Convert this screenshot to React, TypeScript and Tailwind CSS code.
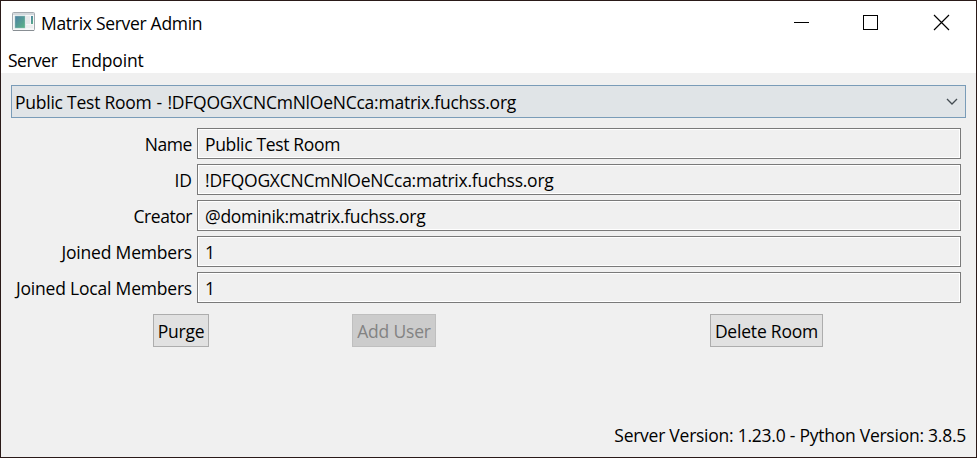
import type { ReactNode } from "react";

const fields = [
  { label: "Name", value: "Public Test Room", spacing: "tracking-[-0.33px]", labelSpacing: "tracking-[-0.45px]" },
  { label: "ID", value: "!DFQOGXCNCmNlOeNCca:matrix.fuchss.org", spacing: "tracking-[-0.24px]", labelSpacing: "" },
  { label: "Creator", value: "@dominik:matrix.fuchss.org", spacing: "tracking-[-0.3px]", labelSpacing: "tracking-[-0.45px]" },
  { label: "Joined Members", value: "1", spacing: "", labelSpacing: "tracking-[-0.2px]" },
  { label: "Joined Local Members", value: "1", spacing: "", labelSpacing: "tracking-[-0.2px]" },
];

function AppIcon() {
  return (
    <svg className="ml-[11px] mt-[11px] shrink-0" width="23" height="20" viewBox="0 0 23 20">
      <defs>
        <linearGradient id="pane" x1="0" y1="0" x2="1" y2="1">
          <stop offset="0" stopColor="#4d7fa6" />
          <stop offset="1" stopColor="#5cb585" />
        </linearGradient>
      </defs>
      <rect x="0.5" y="0.5" width="22" height="18" rx="1" fill="#f6f7f8" stroke="#a3a9ae" />
      <rect x="1" y="1" width="21" height="2" fill="#d3d8dc" />
      <rect x="3" y="4" width="10" height="12" fill="url(#pane)" stroke="#9ec3c0" strokeWidth="0.5" />
      <rect x="14" y="4" width="4" height="8" fill="#e6e8ea" />
      <rect x="19" y="4" width="2" height="8" fill="url(#pane)" />
      <rect x="14" y="13" width="7" height="3" fill="#eceeef" />
      <path d="M1 18.5h21" stroke="#888e93" />
    </svg>
  );
}

function PushButton({ className, children, disabled }: { className: string; children: ReactNode; disabled?: boolean }) {
  return (
    <button
      disabled={disabled}
      className={`flex h-[33px] items-center justify-center whitespace-nowrap border ${className} ${
        disabled ? "border-[#bfbfbf] bg-[#cccccc] text-[#838383]" : "border-[#adadad] bg-[#e1e1e1] text-black"
      }`}
    >
      {children}
    </button>
  );
}

export default function App() {
  return (
    <div className="flex h-[458px] w-[977px] flex-col overflow-hidden border border-[#2a1a18] bg-[#f0f0f0] font-['Open_Sans',sans-serif] text-[17.5px] leading-6 text-black">
      <header className="flex h-[46px] shrink-0 bg-white">
        <AppIcon />
        <h1 className="ml-1.5 mt-[10px] tracking-[-0.3px]">Matrix Server Admin</h1>
        <svg className="ml-auto mr-[26px] mt-[13px]" width="157" height="17" viewBox="0 0 157 17" fill="none" stroke="black">
          <path d="M1 8.5h15" />
          <rect x="70.5" y="1.5" width="14" height="14" />
          <path d="M141 1l15 15M156 1l-15 15" strokeWidth="1.2" />
        </svg>
      </header>
      <nav className="flex h-[26px] shrink-0 gap-[14px] bg-white pl-[7px] pt-[1px]">
        <span className="tracking-[-0.5px]">Server</span>
        <span className="tracking-[-0.2px]">Endpoint</span>
      </nav>
      <main className="flex grow flex-col pl-[10px] pr-[10px] pt-[12px]">
        <div className="flex h-[33px] items-center justify-between border border-[#7a9cb8] bg-[#e0e4e7] pl-[3px] pr-[7px]">
          <span className="tracking-[-0.24px]">
            Public Test Room<span className="tracking-[0.4px]"> - </span>!DFQOGXCNCmNlOeNCca:matrix.fuchss.org
          </span>
          <svg width="12" height="8" viewBox="0 0 12 8" fill="none" stroke="#444c52" strokeWidth="1.3">
            <path d="M1 1l5 5 5-5" />
          </svg>
        </div>
        <div className="mt-[10px] flex flex-col gap-[5px] pr-[5px]">
          {fields.map((f) => (
            <label key={f.label} className="flex h-[31px]">
              <span className={`mr-[5px] w-[181px] shrink-0 whitespace-nowrap pt-[4px] text-right ${f.labelSpacing}`}>{f.label}</span>
              <span className={`grow border border-[#7a7a7a] pl-[7px] pt-[3px] shadow-[inset_0_0_0_1px_white] ${f.spacing}`}>{f.value}</span>
            </label>
          ))}
        </div>
        <div className="mt-[11px] flex pl-[142px]">
          <PushButton className="w-[56px] tracking-[-0.2px]">Purge</PushButton>
          <PushButton className="ml-[143px] w-[84px] tracking-[-0.2px]" disabled>Add User</PushButton>
          <PushButton className="ml-[274px] w-[113px] tracking-[-0.2px]">Delete Room</PushButton>
        </div>
        <footer className="mb-[10px] mt-auto text-right tracking-[-0.25px]">Server Version: 1.23.0 - Python Version: 3.8.5</footer>
      </main>
    </div>
  );
}
